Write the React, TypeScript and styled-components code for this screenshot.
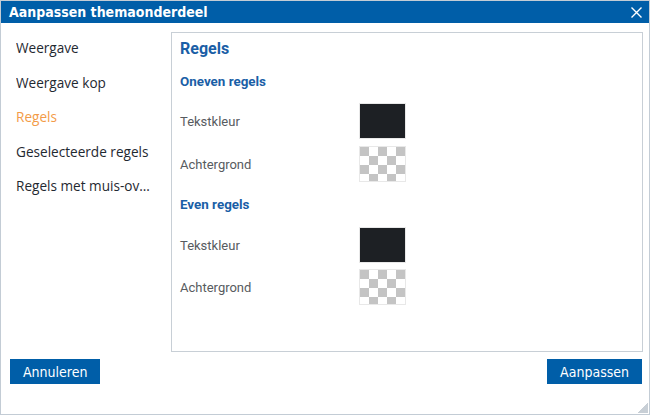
import styled, { createGlobalStyle } from 'styled-components'
import { ReactElement } from 'react'

const GlobalStyle = createGlobalStyle`
  html, body {
    margin: 0;
    padding: 0;
    background: #ffffff;
  }
`

const Frame = styled.div`
  position: relative;
  width: 650px;
  height: 415px;
  box-sizing: border-box;
  border: 1px solid #c3ccd5;
  display: flex;
  flex-direction: column;
  background: #ffffff;
  overflow: hidden;
`

const TitleBar = styled.div`
  height: 22px;
  flex: none;
  background: #005ea8;
  color: #ffffff;
  display: flex;
  align-items: center;
  justify-content: space-between;
  padding: 0 5px 0 8px;
  font-family: 'Liberation Sans Narrow', 'DejaVu Sans Condensed', sans-serif;
  font-weight: bold;
  font-size: 14px;
`

const CloseButton = styled.button`
  border: none;
  background: transparent;
  padding: 0;
  width: 16px;
  height: 16px;
  display: flex;
  align-items: center;
  justify-content: center;
  cursor: pointer;
`

const Body = styled.div`
  display: flex;
  padding: 9px 6px 0 0;
  height: 320px;
  flex: none;
`

const Nav = styled.ul`
  list-style: none;
  margin: -1px 0 0 0;
  padding: 0 21px 0 15px;
  width: 134px;
  flex: none;
`

const NavItem = styled.li<{ $active?: boolean }>`
  height: 34.5px;
  line-height: 34.5px;
  font-family: 'Open Sans', sans-serif;
  font-size: 13.6px;
  color: ${({ $active }) => ($active ? '#f39b47' : '#1f2931')};
  white-space: nowrap;
  overflow: hidden;
  text-overflow: ellipsis;
  cursor: pointer;
`

const Panel = styled.div`
  flex: 1;
  border: 1px solid #c8cfd6;
  padding: 6px 8px 0 8px;
  font-family: Roboto, sans-serif;
`

const Heading = styled.div`
  font-size: 16px;
  line-height: 20px;
  font-weight: bold;
  color: #1a5ea6;
`

const SubHeading = styled.div<{ $top: number }>`
  font-size: 13.4px;
  line-height: 20px;
  font-weight: bold;
  color: #1a5ea6;
  margin-top: ${({ $top }) => $top}px;
`

const Rows = styled.div<{ $top: number; $gap: number }>`
  display: flex;
  flex-direction: column;
  gap: ${({ $gap }) => $gap}px;
  margin-top: ${({ $top }) => $top}px;
`

const Row = styled.div`
  display: grid;
  grid-template-columns: 179px 47px;
  align-items: center;
  height: 36px;
  font-size: 13px;
  color: #575b60;
`

const Swatch = styled.div<{ $empty?: boolean }>`
  width: 47px;
  height: 36px;
  box-sizing: border-box;
  border: 1px solid #e8e8e8;
  background-color: ${({ $empty }) => ($empty ? '#ffffff' : '#1d2024')};
  background-image: ${({ $empty }) =>
    $empty ? 'conic-gradient(#ffffff 25%, #c4c4c4 0 50%, #ffffff 0 75%, #c4c4c4 0)' : 'none'};
  background-size: 18px 18px;
  background-position: 0 0;
`

const Footer = styled.div`
  display: flex;
  justify-content: space-between;
  padding: 7px 7px 0 9px;
`

const ActionButton = styled.button`
  height: 25px;
  border: none;
  background: #005ea8;
  color: #ffffff;
  font-family: 'DejaVu Sans Condensed', 'DejaVu Sans', sans-serif;
  font-size: 14px;
  padding: 0 13px;
  cursor: pointer;
`

const ResizeGrip = styled.div`
  position: absolute;
  right: 1px;
  bottom: 1px;
  width: 11px;
  height: 11px;
  background: linear-gradient(135deg, transparent 50%, #c8cfd6 50%);
`

const navItems = ['Weergave', 'Weergave kop', 'Regels', 'Geselecteerde regels', 'Regels met muis-over']

type ColorGroup = { title: string; top: number; rowsTop: number; gap: number }

const groups: ColorGroup[] = [
  { title: 'Oneven regels', top: 13, rowsTop: 11, gap: 7 },
  { title: 'Even regels', top: 13, rowsTop: 12, gap: 6 },
]

export default function App(): ReactElement {
  return (
    <>
      <GlobalStyle />
      <Frame>
        <TitleBar>
          <span>Aanpassen themaonderdeel</span>
          <CloseButton aria-label="Sluiten">
            <svg width="13" height="13" viewBox="0 0 13 13">
              <path d="M1.5 1.5L11.5 11.5M11.5 1.5L1.5 11.5" stroke="#ffffff" strokeWidth="1.4" />
            </svg>
          </CloseButton>
        </TitleBar>
        <Body>
          <Nav>
            {navItems.map((item) => (
              <NavItem key={item} $active={item === 'Regels'}>
                {item}
              </NavItem>
            ))}
          </Nav>
          <Panel>
            <Heading>Regels</Heading>
            {groups.map((g) => (
              <div key={g.title}>
                <SubHeading $top={g.top}>{g.title}</SubHeading>
                <Rows $top={g.rowsTop} $gap={g.gap}>
                  <Row>
                    <span>Tekstkleur</span>
                    <Swatch />
                  </Row>
                  <Row>
                    <span>Achtergrond</span>
                    <Swatch $empty />
                  </Row>
                </Rows>
              </div>
            ))}
          </Panel>
        </Body>
        <Footer>
          <ActionButton>Annuleren</ActionButton>
          <ActionButton>Aanpassen</ActionButton>
        </Footer>
        <ResizeGrip />
      </Frame>
    </>
  )
}
